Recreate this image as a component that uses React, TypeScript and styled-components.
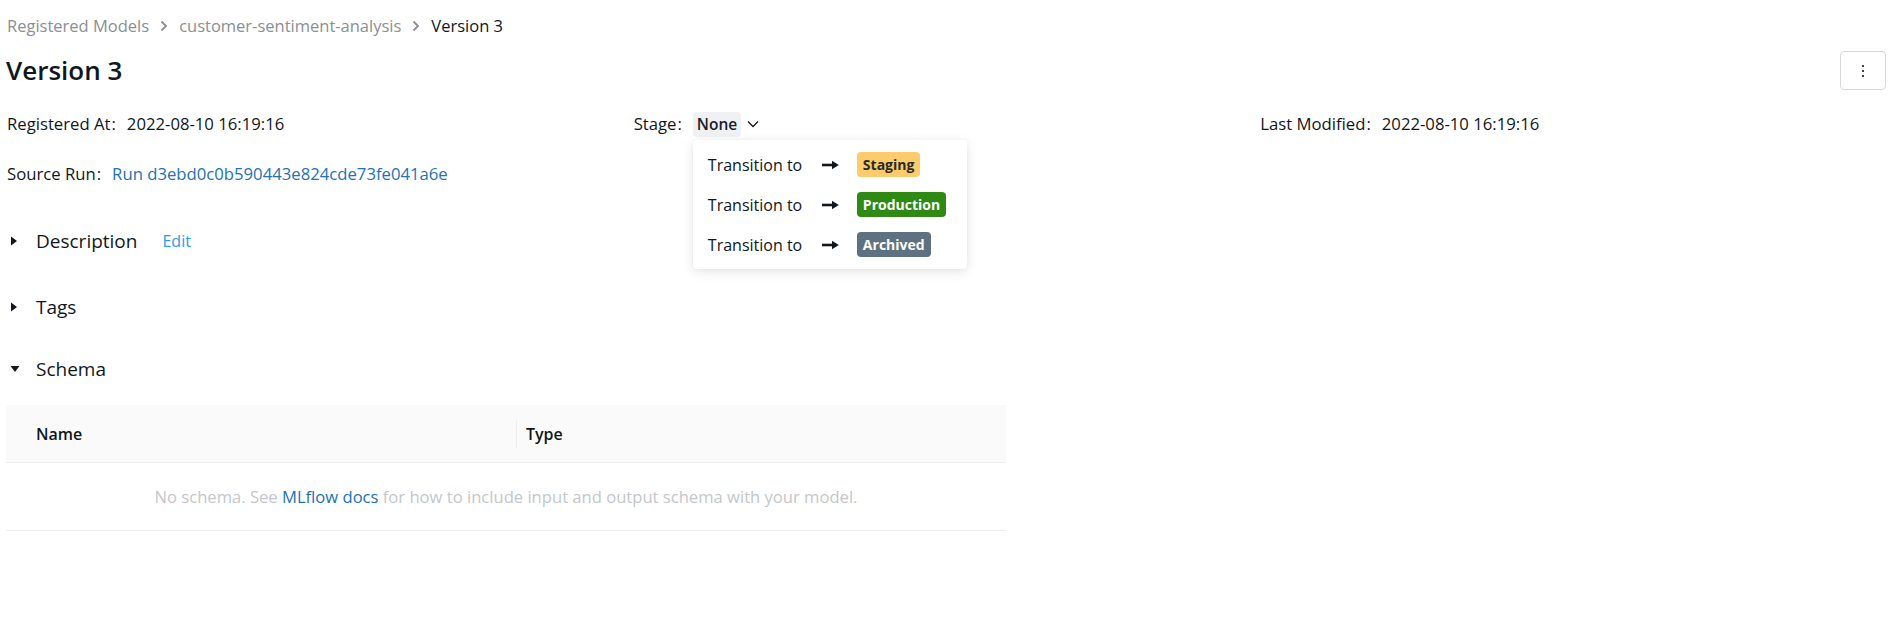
import React from "react";
import styled, { createGlobalStyle } from "styled-components";

const Global = createGlobalStyle`
  html, body { margin: 0; padding: 0; background: #fff; }
  body {
    font-family: "Open Sans", "Noto Sans", sans-serif;
    color: #11171c;
    font-size: 16px;
  }
`;

const Page = styled.div`
  padding: 14px 10px 0 6px;
  display: flex;
  flex-direction: column;
`;

const Breadcrumb = styled.nav`
  display: flex;
  align-items: center;
  height: 24px;
  line-height: 24px;
  gap: 11px;
  font-size: 16.5px;
  padding-left: 1px;
`;

const Crumb = styled.span<{ $current?: boolean }>`
  color: ${(p) => (p.$current ? "#11171c" : "#8a8f94")};
`;

const HeaderRow = styled.div`
  display: flex;
  align-items: center;
  justify-content: space-between;
  margin-top: 12px;
  height: 39px;
`;

const Title = styled.h1`
  margin: 0;
  font-size: 26px;
  font-weight: 600;
  line-height: 38px;
`;

const KebabButton = styled.button`
  width: 46px;
  height: 39px;
  border: 1px solid #d6d9dc;
  border-radius: 4px;
  background: #fff;
  display: flex;
  align-items: center;
  justify-content: center;
  padding: 0;
  margin-right: 1px;
  margin-top: 2px;
`;

const Descriptions = styled.div`
  display: grid;
  grid-template-columns: repeat(3, 1fr);
  row-gap: 26px;
  margin-top: 23px;
  padding-left: 1px;
`;

const DescItem = styled.div`
  display: flex;
  align-items: center;
  height: 24px;
  line-height: 24px;
  font-size: 16.7px;
  position: relative;
`;

const Label = styled.span`
  &::after {
    content: ":";
    margin: 0 11px 0 1px;
  }
`;

const Link = styled.a<{ $light?: boolean }>`
  color: ${(p) => (p.$light ? "#2d9af2" : "#2272b4")};
  text-decoration: none;
  cursor: pointer;
`;

const StageWrap = styled.span`
  position: relative;
  display: inline-flex;
  align-items: center;
  gap: 6px;
`;

const StageBadge = styled.span`
  background: #eff1f3;
  border-radius: 4px;
  height: 25px;
  line-height: 25px;
  padding: 0 4px;
  font-size: 15.5px;
  font-weight: 600;
  color: #1a2026;
`;

const Menu = styled.div`
  position: absolute;
  top: calc(100% + 3px);
  left: 0;
  width: 274px;
  background: #fff;
  border-radius: 4px;
  box-shadow: 0 3px 12px rgba(0, 0, 0, 0.1), 0 0 4px rgba(0, 0, 0, 0.04);
  padding: 5px 0 4px;
  z-index: 10;
`;

const MenuItem = styled.div`
  display: flex;
  align-items: center;
  height: 40px;
  padding-left: 15px;
  font-size: 16px;
  white-space: nowrap;
`;

const MenuText = styled.span`
  width: 114px;
`;

const ArrowBox = styled.span`
  display: inline-flex;
  width: 35px;
`;

const Tag = styled.span<{ $bg: string; $fg: string }>`
  display: inline-block;
  background: ${(p) => p.$bg};
  color: ${(p) => p.$fg};
  height: 25px;
  line-height: 25px;
  padding: 0 6px;
  border-radius: 4px;
  font-size: 14px;
  font-weight: 700;
`;

const SectionHeader = styled.div<{ $gap: number }>`
  display: flex;
  align-items: center;
  height: 28px;
  margin-top: ${(p) => p.$gap}px;
  padding-left: 4px;
`;

const CaretBox = styled.span`
  display: inline-flex;
  width: 26px;
  align-items: center;
`;

const SectionTitle = styled.span`
  font-size: 19px;
  margin-right: 25px;
`;

const EditLink = styled(Link)`
  font-size: 16px;
`;

const Table = styled.div`
  width: 1000px;
  margin-top: 22px;
`;

const THead = styled.div`
  display: grid;
  grid-template-columns: 510px 1fr;
  background: #fafafa;
  height: 57px;
  border-bottom: 1px solid #eceef0;
  align-items: center;
`;

const Th = styled.div<{ $divider?: boolean; $pad: number }>`
  position: relative;
  padding-left: ${(p) => p.$pad}px;
  font-size: 16px;
  font-weight: 600;
  color: #11171c;
  ${(p) =>
    p.$divider &&
    `&::before {
      content: "";
      position: absolute;
      left: 0;
      top: 50%;
      transform: translateY(-50%);
      width: 1px;
      height: 28px;
      background: #eeeeee;
    }`}
`;

const EmptyRow = styled.div`
  height: 67px;
  border-bottom: 1px solid #eceef0;
  display: flex;
  align-items: center;
  justify-content: center;
  font-size: 16.6px;
  color: #c3c7cb;
`;

const Chevron = () => (
  <svg width="8" height="12" viewBox="0 0 8 12">
    <path d="M1.5 1.5 L6 6 L1.5 10.5" fill="none" stroke="#8a8f94" strokeWidth="1.8" />
  </svg>
);

const DownChevron = () => (
  <svg width="12" height="8" viewBox="0 0 12 8">
    <path d="M1 1.5 L6 6.5 L11 1.5" fill="none" stroke="#11171c" strokeWidth="1.3" />
  </svg>
);

const Arrow = () => (
  <svg width="17" height="10" viewBox="0 0 17 10">
    <path d="M0 5 H11" stroke="#11171c" strokeWidth="2.6" />
    <path d="M10 0.8 L16.8 5 L10 9.2 Z" fill="#11171c" />
  </svg>
);

const CaretRight = () => (
  <svg width="8" height="10" viewBox="0 0 8 10">
    <path d="M1 0.5 L7 5 L1 9.5 Z" fill="#11171c" />
  </svg>
);

const CaretDown = () => (
  <svg width="10" height="8" viewBox="0 0 10 8">
    <path d="M0.5 1 L9.5 1 L5 7 Z" fill="#11171c" />
  </svg>
);

const Dots = () => (
  <svg width="4" height="14" viewBox="0 0 4 14">
    <circle cx="2" cy="2" r="1.1" fill="#11171c" />
    <circle cx="2" cy="7" r="1.1" fill="#11171c" />
    <circle cx="2" cy="12" r="1.1" fill="#11171c" />
  </svg>
);

const transitions = [
  { name: "Staging", bg: "#fccb6c", fg: "#2b2a25" },
  { name: "Production", bg: "#2e8a13", fg: "#ffffff" },
  { name: "Archived", bg: "#5e7180", fg: "#ffffff" },
];

export default function App() {
  return (
    <>
      <Global />
      <Page>
        <Breadcrumb>
          <Crumb>Registered Models</Crumb>
          <Chevron />
          <Crumb>customer-sentiment-analysis</Crumb>
          <Chevron />
          <Crumb $current>Version 3</Crumb>
        </Breadcrumb>
        <HeaderRow>
          <Title>Version 3</Title>
          <KebabButton aria-label="More">
            <Dots />
          </KebabButton>
        </HeaderRow>
        <Descriptions>
          <DescItem>
            <Label>Registered At</Label>
            <span>2022-08-10 16:19:16</span>
          </DescItem>
          <DescItem>
            <Label>Stage</Label>
            <StageWrap>
              <StageBadge>None</StageBadge>
              <DownChevron />
              <Menu>
                {transitions.map((t) => (
                  <MenuItem key={t.name}>
                    <MenuText>Transition to</MenuText>
                    <ArrowBox>
                      <Arrow />
                    </ArrowBox>
                    <Tag $bg={t.bg} $fg={t.fg}>
                      {t.name}
                    </Tag>
                  </MenuItem>
                ))}
              </Menu>
            </StageWrap>
          </DescItem>
          <DescItem>
            <Label>Last Modified</Label>
            <span>2022-08-10 16:19:16</span>
          </DescItem>
          <DescItem>
            <Label>Source Run</Label>
            <Link>Run d3ebd0c0b590443e824cde73fe041a6e</Link>
          </DescItem>
        </Descriptions>
        <SectionHeader $gap={41}>
          <CaretBox>
            <CaretRight />
          </CaretBox>
          <SectionTitle>Description</SectionTitle>
          <EditLink $light>Edit</EditLink>
        </SectionHeader>
        <SectionHeader $gap={38}>
          <CaretBox>
            <CaretRight />
          </CaretBox>
          <SectionTitle>Tags</SectionTitle>
        </SectionHeader>
        <SectionHeader $gap={34}>
          <CaretBox>
            <CaretDown />
          </CaretBox>
          <SectionTitle>Schema</SectionTitle>
        </SectionHeader>
        <Table>
          <THead>
            <Th $pad={30}>Name</Th>
            <Th $pad={10} $divider>
              Type
            </Th>
          </THead>
          <EmptyRow>
            <span>
              No schema. See <Link>MLflow docs</Link> for how to include input and output schema with your model.
            </span>
          </EmptyRow>
        </Table>
      </Page>
    </>
  );
}
